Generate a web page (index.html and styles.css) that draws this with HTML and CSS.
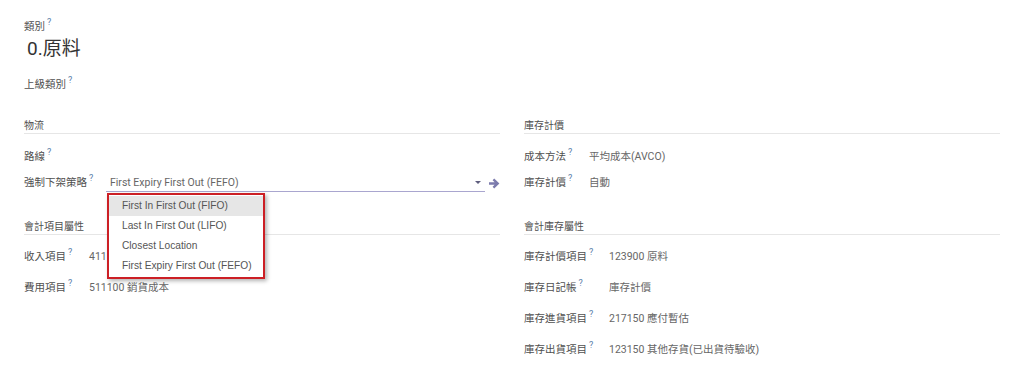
FILE: index.html
```html
<!DOCTYPE html>
<html lang="zh-Hant">
  <head>
    <meta charset="UTF-8" />
    <meta name="viewport" content="width=device-width, initial-scale=1.0" />
    <title>產品類別 - 0.原料</title>
    <link rel="stylesheet" href="styles.css">
  </head>
  <body>
    <div class="sheet">
      <div class="lbl top-lbl">類別<sup>?</sup></div>
      <h1 class="title">0.原料</h1>
      <div class="lbl parent-lbl">上級類別<sup>?</sup></div>

      <div class="groups">
        <section class="group">
          <div class="group-title">物流</div>
          <div class="rows rows-short w82">
            <div class="lbl">路線<sup>?</sup></div>
            <div class="val"></div>
            <div class="lbl">強制下架策略<sup>?</sup></div>
            <div class="val">
              <div class="many2one">
                <div class="select">
                  <span class="select-text">First Expiry First Out (FEFO)</span>
                  <span class="caret"></span>
                  <div class="menu-frame">
                    <ul class="menu">
                      <li class="active">First In First Out (FIFO)</li>
                      <li>Last In First Out (LIFO)</li>
                      <li>Closest Location</li>
                      <li>First Expiry First Out (FEFO)</li>
                    </ul>
                  </div>
                </div>
                <span class="ext-link">
                  <svg width="11" height="11" viewBox="0 0 11 11">
                    <path d="M0 4.2h5.6L3.6 2.2 5.2 0.6 10.4 5.5 5.2 10.4 3.6 8.8 5.6 6.8H0z" fill="#7c7bad" />
                  </svg>
                </span>
              </div>
            </div>
          </div>
        </section>

        <section class="group">
          <div class="group-title">庫存計價</div>
          <div class="rows rows-short w65">
            <div class="lbl">成本方法<sup>?</sup></div>
            <div class="val">平均成本(AVCO)</div>
            <div class="lbl">庫存計價<sup>?</sup></div>
            <div class="val">自動</div>
          </div>
        </section>

        <section class="group">
          <div class="group-title">會計項目屬性</div>
          <div class="rows rows-tall w65">
            <div class="lbl">收入項目<sup>?</sup></div>
            <div class="val">411100 銷貨收入</div>
            <div class="lbl">費用項目<sup>?</sup></div>
            <div class="val">511100 銷貨成本</div>
          </div>
        </section>

        <section class="group">
          <div class="group-title">會計庫存屬性</div>
          <div class="rows rows-tall w85">
            <div class="lbl">庫存計價項目<sup>?</sup></div>
            <div class="val">123900 原料</div>
            <div class="lbl">庫存日記帳<sup>?</sup></div>
            <div class="val">庫存計價</div>
            <div class="lbl">庫存進貨項目<sup>?</sup></div>
            <div class="val">217150 應付暫估</div>
            <div class="lbl">庫存出貨項目<sup>?</sup></div>
            <div class="val">123150 其他存貨(已出貨待驗收)</div>
          </div>
        </section>
      </div>
    </div>
  </body>
</html>
```

FILE: styles.css
```css
body {
  margin: 0;
  background: #fff;
  font-family: Roboto, "Noto Sans CJK TC", sans-serif;
  color: #555;
}

.sheet {
  padding: 20px 24px 0 24px;
}

.lbl {
  font-size: 10.5px;
  line-height: 14px;
  color: #4f4f4f;
  white-space: nowrap;
}

.lbl sup {
  font-family: Roboto, sans-serif;
  font-size: 9px;
  color: #5b80aa;
  margin-left: 2px;
  vertical-align: 5px;
  line-height: 0;
}

.title {
  margin: 3px 0 0 3px;
  font-size: 19px;
  line-height: 24px;
  font-weight: 400;
  color: #333;
}

.parent-lbl {
  margin-top: 17px;
}

.groups {
  display: grid;
  grid-template-columns: 1fr 1fr;
  column-gap: 24px;
  row-gap: 24px;
  margin-top: 27px;
}

.group-title {
  font-size: 10px;
  line-height: 14px;
  color: #4f4f4f;
  border-bottom: 1px solid #e6e6e6;
}

.rows {
  display: grid;
  align-items: center;
}

.rows-short {
  margin-top: 10px;
  grid-auto-rows: 26px;
}

.rows-tall {
  margin-top: 6px;
  grid-auto-rows: 31px;
}

.w65 { grid-template-columns: 65px 1fr; }
.w82 { grid-template-columns: 82px 1fr; }
.w85 { grid-template-columns: 85px 1fr; }

.val {
  font-size: 10.5px;
  line-height: 14px;
  color: #666;
}

.many2one {
  display: flex;
  align-items: center;
}

.select {
  position: relative;
  flex: 1;
  display: flex;
  align-items: center;
  height: 16px;
  padding-left: 4px;
  border-bottom: 1px solid #a9a6cf;
}

.select-text {
  flex: 1;
  color: #666;
}

.caret {
  width: 0;
  height: 0;
  margin-right: 4px;
  border-left: 3px solid transparent;
  border-right: 3px solid transparent;
  border-top: 3px solid #5f5e7e;
}

.ext-link {
  display: flex;
  width: 15px;
  justify-content: flex-end;
  padding-top: 1px;
}

.menu-frame {
  position: absolute;
  top: 18px;
  left: 1px;
  width: 154px;
  border: 2px solid #cc1f25;
  padding: 1px 0;
  background: #fff;
  box-shadow: 2px 2px 4px rgba(0, 0, 0, 0.3);
}

.menu {
  list-style: none;
  margin: 0;
  padding: 0;
}

.menu li {
  height: 20px;
  line-height: 20px;
  padding-left: 13px;
  font-family: "Liberation Sans", Arial, sans-serif;
  font-size: 10.2px;
  color: #555;
  white-space: nowrap;
}

.menu li.active {
  background: #e6e6e6;
}
```
